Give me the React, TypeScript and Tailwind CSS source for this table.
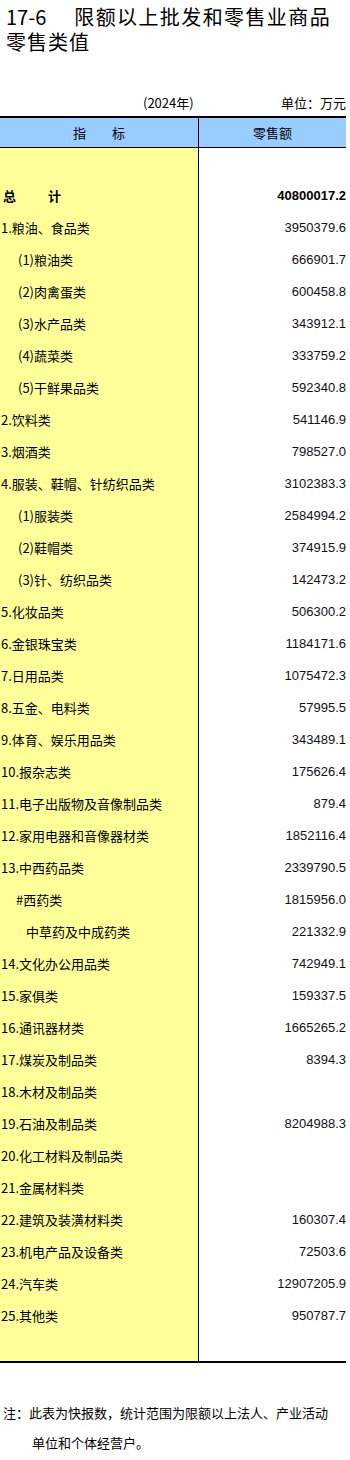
type Row = { label: string; value: string; indent?: number; bold?: boolean }

const rows: Row[] = [
    { label: '1.粮油、食品类', value: '3950379.6' },
    { label: '(1)粮油类', value: '666901.7', indent: 18 },
    { label: '(2)肉禽蛋类', value: '600458.8', indent: 18 },
    { label: '(3)水产品类', value: '343912.1', indent: 18 },
    { label: '(4)蔬菜类', value: '333759.2', indent: 18 },
    { label: '(5)干鲜果品类', value: '592340.8', indent: 18 },
    { label: '2.饮料类', value: '541146.9' },
    { label: '3.烟酒类', value: '798527.0' },
    { label: '4.服装、鞋帽、针纺织品类', value: '3102383.3' },
    { label: '(1)服装类', value: '2584994.2', indent: 18 },
    { label: '(2)鞋帽类', value: '374915.9', indent: 18 },
    { label: '(3)针、纺织品类', value: '142473.2', indent: 18 },
    { label: '5.化妆品类', value: '506300.2' },
    { label: '6.金银珠宝类', value: '1184171.6' },
    { label: '7.日用品类', value: '1075472.3' },
    { label: '8.五金、电料类', value: '57995.5' },
    { label: '9.体育、娱乐用品类', value: '343489.1' },
    { label: '10.报杂志类', value: '175626.4' },
    { label: '11.电子出版物及音像制品类', value: '879.4' },
    { label: '12.家用电器和音像器材类', value: '1852116.4' },
    { label: '13.中西药品类', value: '2339790.5' },
    { label: '#西药类', value: '1815956.0', indent: 16 },
    { label: '中草药及中成药类', value: '221332.9', indent: 26 },
    { label: '14.文化办公用品类', value: '742949.1' },
    { label: '15.家俱类', value: '159337.5' },
    { label: '16.通讯器材类', value: '1665265.2' },
    { label: '17.煤炭及制品类', value: '8394.3' },
    { label: '18.木材及制品类', value: '' },
    { label: '19.石油及制品类', value: '8204988.3' },
    { label: '20.化工材料及制品类', value: '' },
    { label: '21.金属材料类', value: '' },
    { label: '22.建筑及装潢材料类', value: '160307.4' },
    { label: '23.机电产品及设备类', value: '72503.6' },
    { label: '24.汽车类', value: '12907205.9' },
    { label: '25.其他类', value: '950787.7' },
]

const cjk = { fontFamily: '"Noto Sans CJK SC", "Noto Sans", sans-serif' }
const num = { fontFamily: '"Liberation Sans", Arial, sans-serif' }

function TableRow({ row }: { row: Row }) {
    return (
        <div className="flex h-[32px]">
            <div className="w-[199px] bg-[#ffff99] border-r border-black flex items-center text-[13px] text-black"
                 style={{ ...cjk, paddingLeft: row.indent ?? 1 }}>
                {row.label}
            </div>
            <div className="flex-1 flex items-center justify-end text-[13px] text-[#111]" style={num}>
                {row.value}
            </div>
        </div>
    )
}

export default function App() {
    return (
        <div className="w-[350px] h-[1460px] bg-white text-black" style={cjk}>
            {/* title */}
            <div className="pt-[4px] pl-[6px] text-[20px]">
                <div className="h-[25px] flex items-center">
                    <span>17-6</span><span className="ml-[28px] tracking-[1.4px]">限额以上批发和零售业商品</span>
                </div>
                <div className="h-[25px] flex items-center tracking-[1px]">零售类值</div>
            </div>

            <div className="mt-[41px] mb-[5px] w-[346px] h-[16px] flex items-center text-[13px] leading-[16px]">
                <span className="pl-[143px]">(2024年)</span>
                <span className="ml-auto">单位：万元</span>
            </div>

            {/* table */}
            <div className="w-[346px] border-t-2 border-b-2 border-black">
                <div className="flex h-[30px] bg-[#99ccff] border-b border-black text-[13px]">
                    <div className="w-[199px] border-r border-black flex items-center justify-center gap-[26px]">
                        <span>指</span><span>标</span>
                    </div>
                    <div className="flex-1 flex items-center justify-center">零售额</div>
                </div>

                <div className="flex h-[32px]">
                    <div className="w-[199px] bg-[#ffff99] border-r border-black"></div>
                    <div className="flex-1"></div>
                </div>

                <div className="flex h-[32px]">
                    <div className="w-[199px] bg-[#ffff99] border-r border-black flex items-center pl-[3px] text-[13px] font-bold gap-[32px]">
                        <span>总</span><span>计</span>
                    </div>
                    <div className="flex-1 flex items-center justify-end text-[13px] font-bold" style={num}>
                        40800017.2
                    </div>
                </div>

                {rows.map((r, i) => <TableRow key={i} row={r}/>)}

                <div className="flex h-[29px]">
                    <div className="w-[199px] bg-[#ffff99] border-r border-black"></div>
                    <div className="flex-1"></div>
                </div>
            </div>

            {/* note */}
            <div className="pt-[35px] pl-[3px] text-[13px] leading-[30px]">
                <div>注：此表为快报数，统计范围为限额以上法人、产业活动</div>
                <div className="pl-[29px]">单位和个体经营户。</div>
            </div>
        </div>
    )
}
